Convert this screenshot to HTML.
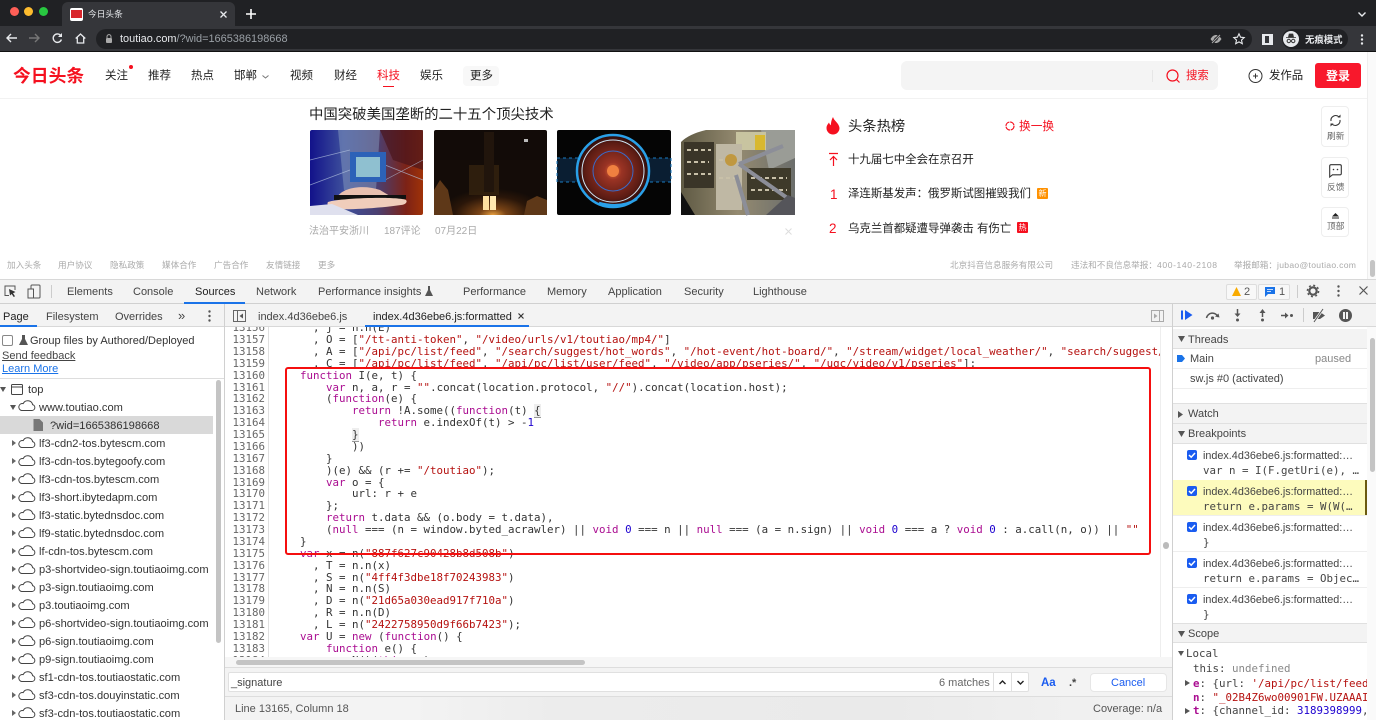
<!DOCTYPE html>
<html lang="zh"><head><meta charset="utf-8"><title>今日头条</title>
<style>
html,body{margin:0;padding:0;width:1376px;height:720px;overflow:hidden;background:#fff}
body{font-family:"Liberation Sans","Noto Sans CJK SC",sans-serif;position:relative}
.a{position:absolute}
.t{position:absolute;white-space:nowrap;height:16px;line-height:16px}
.n{font-size:11.5px;color:#222;top:68px}
.f{font-size:8.6px;color:#aaa;top:257px}
.dt{font-size:11px;color:#444;top:284px}
.st{font-size:11px;color:#444;top:309px}
.tr{font-size:11.1px;color:#333}
.mono{font-family:"DejaVu Sans Mono","Liberation Mono",monospace;font-size:10.8px!important}
#gut,#code{position:absolute;font-family:"DejaVu Sans Mono","Liberation Mono",monospace;font-size:10.8px;line-height:11.87px;white-space:pre;margin:0}
#gut{left:225px;width:40px;text-align:right;color:#666}
#code{left:274px;color:#333}
.k{color:#aa0d91}.s{color:#b5110f}.d{color:#1c00cf}
.h{font-size:11px;color:#444}
.bp{font-size:10.8px;color:#444;left:1203px}
.cb{position:absolute;left:1187px;width:10px;height:10px;border-radius:2px;background:#1a5cf0}
.cb svg{position:absolute;left:0;top:0}
svg{position:absolute;overflow:visible}
</style></head><body>

<!-- browser chrome -->
<div class="a" style="left:0;top:0;width:1376px;height:26px;background:#202124"></div>
<div class="a" style="left:10px;top:7px;width:9px;height:9px;border-radius:50%;background:#ff5f57"></div>
<div class="a" style="left:24px;top:7px;width:9px;height:9px;border-radius:50%;background:#febc2e"></div>
<div class="a" style="left:39px;top:7px;width:9px;height:9px;border-radius:50%;background:#28c840"></div>
<div class="a" style="left:62px;top:2px;width:173px;height:24px;background:#35363a;border-radius:6px 6px 0 0"></div>
<div class="a" style="left:70px;top:8px;width:13px;height:13px;background:#fff;border-radius:2px"></div>
<div class="a" style="left:71px;top:10px;width:11px;height:8px;background:#d8262c"></div>
<div class="t" style="left:88px;top:6px;font-size:8.7px;color:#e8eaed">今日头条</div>
<svg style="left:220px;top:11px" width="7" height="7"><path d="M.5.5l6 6M6.5.5l-6 6" stroke="#e8eaed" stroke-width="1.3"/></svg>
<svg style="left:246px;top:9px" width="10" height="10"><path d="M5 0v10M0 5h10" stroke="#fff" stroke-width="1.6"/></svg>
<svg style="left:1358px;top:12px" width="8" height="5"><path d="M.5.5L4 4 7.5.5" stroke="#e8eaed" stroke-width="1.4" fill="none"/></svg>

<div class="a" style="left:0;top:26px;width:1376px;height:25px;background:#35363a"></div>
<div class="a" style="left:0;top:51px;width:1376px;height:1px;background:#111"></div>
<svg style="left:6px;top:33px" width="11" height="10"><path d="M11 5H1M5 1L1 5l4 4" stroke="#e8eaed" stroke-width="1.4" fill="none"/></svg>
<svg style="left:29px;top:33px" width="11" height="10"><path d="M0 5h10M6 1l4 4-4 4" stroke="#777" stroke-width="1.4" fill="none"/></svg>
<svg style="left:52px;top:33px" width="11" height="11"><path d="M9.4 6.5A4.2 4.2 0 1 1 8.5 2.3" stroke="#e8eaed" stroke-width="1.4" fill="none"/><path d="M10 0v4H6z" fill="#e8eaed"/></svg>
<svg style="left:75px;top:33px" width="11" height="11"><path d="M.7 5.5L5.5 1l4.8 4.5M2.3 4.5v5.5h6.4V4.5" stroke="#e8eaed" stroke-width="1.3" fill="none"/></svg>
<div class="a" style="left:96px;top:29px;width:1156px;height:20px;border-radius:10px;background:#202124"></div>
<svg style="left:105px;top:34px" width="8" height="10"><path d="M2 4V2.6a2 2 0 0 1 4 0V4" stroke="#aaa" fill="none"/><rect x="1" y="4" width="6" height="5" rx="1" fill="#aaa"/></svg>
<div class="t" style="left:120px;top:31px;font-size:10.95px;color:#e8eaed;font-weight:400">toutiao.com<span style="color:#9aa0a6">/?wid=1665386198668</span></div>
<svg style="left:1210px;top:34px" width="12" height="10"><path d="M.5 5C2.5 2 4 1 6 1s3.500 1 5.500 4C9.500 8 8 9 6 9S2.500 8 .5 5z" fill="#aaa"/><circle cx="6" cy="5" r="1.800" fill="#35363a"/><path d="M2 9.500L10 .5" stroke="#202124" stroke-width="2.500"/><path d="M2 9L10 1" stroke="#aaa" stroke-width="1"/></svg>
<svg style="left:1233px;top:33px" width="12" height="11"><path d="M6 .8l1.600 3.400 3.600.4-2.700 2.500.8 3.600L6 8.900l-3.300 1.800.8-3.600L.8 4.600l3.600-.4z" stroke="#e8eaed" fill="none" stroke-width="1.100"/></svg>
<div class="a" style="left:1262px;top:34px;width:11px;height:11px;background:#e8eaed"></div>
<div class="a" style="left:1265px;top:36px;width:4px;height:7px;background:#35363a"></div>
<div class="a" style="left:1282px;top:29px;width:66px;height:20px;border-radius:10px;background:#202124"></div>
<div class="a" style="left:1283px;top:31px;width:16px;height:16px;border-radius:50%;background:#e8eaed"></div>
<svg style="left:1286px;top:34px" width="10" height="10"><path d="M2.500 3l.7-3h3.600l.7 3zM0 3.500h10" stroke="#333" fill="#333" stroke-width=".8"/><circle cx="2.800" cy="7" r="1.700" fill="none" stroke="#333"/><circle cx="7.200" cy="7" r="1.700" fill="none" stroke="#333"/></svg>
<div class="t" style="left:1305px;top:32px;font-size:9.400px;color:#e8eaed;font-weight:700">无痕模式</div>
<svg style="left:1360px;top:34px" width="4" height="11"><circle cx="2" cy="1.500" r="1.200" fill="#e8eaed"/><circle cx="2" cy="5.500" r="1.200" fill="#e8eaed"/><circle cx="2" cy="9.500" r="1.200" fill="#e8eaed"/></svg>

<!-- page header -->
<div class="a" style="left:0;top:98px;width:1367px;height:1px;background:#f2f2f2"></div>
<div class="a" style="left:1367px;top:52px;width:9px;height:228px;background:#fafafa;border-left:1px solid #eee;box-sizing:border-box"></div>
<div class="a" style="left:1370px;top:260px;width:5px;height:17px;background:#c4c4c4;border-radius:3px"></div>
<div class="t" style="left:13px;top:67px;height:18px;line-height:18px;font-size:17.800px;font-weight:700;color:#f5101f">今日头条</div>
<div class="t n" style="left:105px">关注</div><div class="a" style="left:129px;top:65px;width:4px;height:4px;border-radius:50%;background:#f5101f"></div>
<div class="t n" style="left:148px">推荐</div>
<div class="t n" style="left:191px">热点</div>
<div class="t n" style="left:234px">邯郸</div>
<svg style="left:262px;top:75px" width="7" height="4"><path d="M.5.5L3.500 3 6.500.5" stroke="#777" fill="none"/></svg>
<div class="t n" style="left:290px">视频</div>
<div class="t n" style="left:334px">财经</div>
<div class="t n" style="left:377px;color:#f5101f">科技</div><div class="a" style="left:383px;top:86px;width:11px;height:1px;background:#f5101f"></div>
<div class="t n" style="left:420px">娱乐</div>
<div class="a" style="left:463px;top:66px;width:36px;height:20px;background:#f8f8f8;border-radius:4px"></div>
<div class="t n" style="left:470px">更多</div>
<div class="a" style="left:901px;top:61px;width:317px;height:29px;background:#f4f4f4;border-radius:6px"></div>
<div class="a" style="left:1152px;top:70px;width:1px;height:12px;background:#e6e6e6"></div>
<svg style="left:1166px;top:69px" width="14" height="14"><circle cx="6.500" cy="6.500" r="5.500" fill="none" stroke="#f5101f" stroke-width="1.200"/><path d="M10.500 10.500l3 3" stroke="#f5101f" stroke-width="1.200"/></svg>
<div class="t" style="left:1186px;top:68px;font-size:11.400px;color:#f5101f">搜索</div>
<svg style="left:1248px;top:69px" width="15" height="15"><circle cx="7.500" cy="7" r="6.500" fill="none" stroke="#333" stroke-width="1"/><path d="M7.500 4.500v5M5 7h5" stroke="#333"/></svg>
<div class="t" style="left:1269px;top:68px;font-size:11.400px;color:#222">发作品</div>
<div class="a" style="left:1315px;top:63px;width:46px;height:25px;background:#f8182c;border-radius:3px"></div>
<div class="t" style="left:1326px;top:68px;font-size:12px;color:#fff;font-weight:700">登录</div>

<!-- article -->
<div class="t" style="left:309px;top:107px;font-size:14.400px;color:#222">中国突破美国垄断的二十五个顶尖技术</div>
<svg style="left:310px;top:130px" width="113" height="85" viewBox="0 0 113 85">
<defs><linearGradient id="g1" x1="0" x2="1" y1="0" y2="0"><stop offset="0" stop-color="#12128a"/><stop offset=".3" stop-color="#3d4f9c"/><stop offset=".6" stop-color="#4b3f70"/><stop offset=".85" stop-color="#7c2216"/><stop offset="1" stop-color="#a03208"/></linearGradient></defs>
<rect width="113" height="85" rx="2" fill="url(#g1)"/><path d="M70 0h43v40l-30-10z" fill="#4a151c" opacity=".7"/>
<path d="M28 0h42l-4 60H34z" fill="#8fa4c4" opacity=".45"/>
<path d="M0 30L40 20M0 55L40 40M75 35L113 50M75 50l38-20" stroke="#b4c4e0" stroke-width=".7" opacity=".7"/>
<rect x="40" y="22" width="36" height="30" fill="#2c62b8"/><rect x="46" y="27" width="24" height="20" fill="#8fc0d0"/>
<path d="M28 66c5-8 25-12 42-6l10 6-40 3z" fill="#e8c0b0"/><path d="M24 65h72v4l-72 1z" fill="#111"/>
<path d="M18 72c10-4 70-6 78-2 2 2-1 5-5 5-20 3-50 5-65 4-6-1-10-4-8-7z" fill="#f0cdbb"/><path d="M0 76l22-2 26 11H0z" fill="#dfe0ee"/></svg>
<svg style="left:434px;top:130px" width="113" height="85" viewBox="0 0 113 85">
<defs><radialGradient id="g2" cx=".52" cy="1" r=".48"><stop offset="0" stop-color="#e8a040"/><stop offset=".25" stop-color="#7a4416"/><stop offset=".7" stop-color="#2a1609"/><stop offset="1" stop-color="#140c08"/></radialGradient></defs>
<rect width="113" height="85" rx="2" fill="#120b08"/><rect y="30" width="113" height="55" fill="url(#g2)"/>
<rect x="35" y="35" width="30" height="30" fill="#35230f" opacity=".8"/><rect x="50" y="2" width="10" height="60" fill="#21150c"/>
<path d="M0 60l6-10 8 10 5 25H0z" fill="#5e3818"/><path d="M90 85l3-14 10-5 10 4v15z" fill="#5e3818"/>
<rect x="49" y="66" width="6" height="14" fill="#ffe0a0"/><rect x="56" y="66" width="6" height="14" fill="#ffe8b0"/><rect x="90" y="9" width="4" height="3" fill="#bbb"/></svg>
<svg style="left:557px;top:130px" width="114" height="85" viewBox="0 0 114 85">
<defs><radialGradient id="g3"><stop offset="0" stop-color="#e87038"/><stop offset=".25" stop-color="#9a3324"/><stop offset=".8" stop-color="#5c1c14"/><stop offset="1" stop-color="#2c0c0a"/></radialGradient></defs>
<rect width="114" height="85" rx="2" fill="#050505"/>
<path d="M0 28h114v24H0z" fill="#0a1e32" stroke="#1a7ac0" stroke-dasharray="3 3"/>
<circle cx="56" cy="41" r="35" fill="url(#g3)"/><circle cx="56" cy="41" r="36" fill="none" stroke="#2aa0e8" stroke-width="2.500"/><circle cx="56" cy="41" r="31" fill="none" stroke="#cfe8f8" stroke-width="1"/><circle cx="56" cy="41" r="20" fill="none" stroke="#3a6ac8" stroke-width="1"/><circle cx="56" cy="41" r="6" fill="#f08040"/>
<path d="M42 73q22 6 38-4" stroke="#2aa0e8" stroke-width="2.500" fill="none"/></svg>
<svg style="left:681px;top:130px" width="114" height="85" viewBox="0 0 114 85">
<defs><linearGradient id="g4" x1="0" x2="1"><stop offset="0" stop-color="#5f5a44"/><stop offset=".5" stop-color="#948a70"/><stop offset="1" stop-color="#6b6e6c"/></linearGradient></defs>
<rect width="114" height="85" rx="2" fill="url(#g4)"/><path d="M0 0h25Q8 4 0 12z" fill="#fff"/><path d="M80 0h34v28L88 40z" fill="#9a9c96"/>
<rect x="55" y="2" width="30" height="18" fill="#c8c4a0"/><rect x="74" y="5" width="10" height="15" fill="#d8b830"/>
<rect x="35" y="14" width="26" height="66" fill="#bfb8a4"/><rect x="3" y="12" width="30" height="46" fill="#3a3528"/><rect x="66" y="38" width="44" height="32" fill="#3e3a2a"/>
<path d="M6 20h24M6 32h22M6 44h24M70 48h36M70 60h36M38 30h20M38 48h20" stroke="#c8c0a8" stroke-width="2" stroke-dasharray="4 3"/>
<path d="M58 34l54 38M58 34l44-18M55 45l12 40" stroke="#8c8e98" stroke-width="4" fill="none"/><circle cx="50" cy="30" r="6" fill="#c09840"/><path d="M0 62l14 23H0z" fill="#111"/><path d="M85 85l22-20 7 3v17z" fill="#55555a"/></svg>
<div class="t" style="left:309px;top:224px;font-size:10px;color:#aaa">法治平安浙川</div>
<div class="t" style="left:384px;top:224px;font-size:10px;color:#aaa">187评论</div>
<div class="t" style="left:435px;top:224px;font-size:10px;color:#aaa">07月22日</div>
<svg style="left:785px;top:228px" width="7" height="7"><path d="M.5.5l6 6M6.500.5l-6 6" stroke="#ddd"/></svg>

<!-- hot list -->
<svg style="left:826px;top:117px" width="14" height="18"><path d="M7 0c1 4 6 6 6.500 11A6.500 6.500 0 0 1 .5 11C.5 8.500 2 7 3 5.500c.5 1.500 1 2.200 1.800 2.700C5 5.500 5.500 2.500 7 0z" fill="#f5101f"/></svg>
<div class="t" style="left:848px;top:119px;font-size:14.300px;color:#222">头条热榜</div>
<svg style="left:1005px;top:121px" width="10" height="10"><circle cx="5" cy="5" r="4" fill="none" stroke="#f5101f" stroke-width="1.200" stroke-dasharray="5.500 .8"/></svg>
<div class="t" style="left:1019px;top:119px;font-size:11.700px;color:#f5101f">换一换</div>
<svg style="left:829px;top:153px" width="9" height="13"><path d="M0 .5h9M4.500 13V3.500M1 7l3.500-3.500L8 7" stroke="#f5101f" stroke-width="1.200" fill="none"/></svg>
<div class="t" style="left:848px;top:152px;font-size:11.450px;color:#222">十九届七中全会在京召开</div>
<div class="t" style="left:830px;top:187px;font-size:13.500px;color:#f5101f">1</div>
<div class="t" style="left:848px;top:186px;font-size:11.450px;color:#222">泽连斯基发声：俄罗斯试图摧毁我们</div>
<div class="a" style="left:1037px;top:188px;width:11px;height:11px;background:#ff9100;border-radius:1px;color:#fff;font-size:8px;line-height:11px;text-align:center">新</div>
<div class="t" style="left:829px;top:221px;font-size:13.500px;color:#f5101f">2</div>
<div class="t" style="left:848px;top:221px;font-size:11.450px;color:#222">乌克兰首都疑遭导弹袭击 有伤亡</div>
<div class="a" style="left:1017px;top:222px;width:11px;height:11px;background:#f5101f;border-radius:1px;color:#fff;font-size:8px;line-height:11px;text-align:center">热</div>

<!-- side widgets -->
<div class="a" style="left:1321px;top:106px;width:28px;height:41px;border:1px solid #eee;border-radius:4px;box-sizing:border-box"></div>
<svg style="left:1329px;top:114px" width="13" height="13"><path d="M2 7A4.700 4.700 0 0 1 10 3M11 6a4.700 4.700 0 0 1-8 4" stroke="#333" stroke-width="1.100" fill="none"/><path d="M8.500 3.500l3 0 0-3zM4.500 9.500l-3 0 0 3z" fill="#333"/></svg>
<div class="t" style="left:1327px;top:128px;font-size:8.700px;color:#666">刷新</div>
<div class="a" style="left:1321px;top:157px;width:28px;height:41px;border:1px solid #eee;border-radius:4px;box-sizing:border-box"></div>
<svg style="left:1329px;top:164px" width="13" height="14"><path d="M.7 2C.7 1.200 1.200.7 2 .7h9c.8 0 1.300.5 1.300 1.300v7.500c0 .8-.5 1.300-1.300 1.300H3.500L.7 13z" fill="none" stroke="#333" stroke-width="1.100"/><circle cx="4.500" cy="5.500" r=".8" fill="#333"/><circle cx="8.500" cy="5.500" r=".8" fill="#333"/></svg>
<div class="t" style="left:1327px;top:179px;font-size:8.700px;color:#666">反馈</div>
<div class="a" style="left:1321px;top:207px;width:28px;height:30px;border:1px solid #eee;border-radius:4px;box-sizing:border-box"></div>
<svg style="left:1332px;top:213px" width="7" height="6"><path d="M3.500 0L7 3.500H0z" fill="#222"/><path d="M0 5h7" stroke="#222"/></svg>
<div class="t" style="left:1327px;top:218px;font-size:8.700px;color:#666">顶部</div>

<!-- footer -->
<div class="t f" style="left:7px">加入头条</div><div class="t f" style="left:58px">用户协议</div><div class="t f" style="left:110px">隐私政策</div><div class="t f" style="left:162px">媒体合作</div><div class="t f" style="left:214px">广告合作</div><div class="t f" style="left:266px">友情链接</div><div class="t f" style="left:318px">更多</div>
<div class="t f" style="left:950px">北京抖音信息服务有限公司</div><div class="t f" style="left:1071px">违法和不良信息举报：<span style="letter-spacing:.6px">400-140-2108</span></div><div class="t f" style="left:1234px">举报邮箱：<span style="letter-spacing:.3px">jubao@toutiao.com</span></div>

<!-- devtools -->
<div class="a" style="left:0;top:279px;width:1376px;height:441px;background:#fff;border-top:1px solid #d8d8d8;box-sizing:border-box"></div>
<div class="a" style="left:0;top:280px;width:1376px;height:24px;background:#f3f3f3;border-bottom:1px solid #d0d0d0;box-sizing:border-box"></div>
<svg style="left:4px;top:285px" width="12" height="13"><path d="M5 10.500H1V1h10v4" stroke="#555" fill="none"/><path d="M5 4l6.500 3-2.500 1.200 2 3-1.300.8-2-3L6 10.500z" fill="#333"/></svg>
<svg style="left:27px;top:284px" width="14" height="15"><rect x="4" y="1" width="9" height="13" rx="1" fill="none" stroke="#555"/><rect x="1" y="5" width="5.500" height="9" fill="#f3f3f3" stroke="#555"/></svg>
<div class="a" style="left:51px;top:285px;width:1px;height:13px;background:#ccc"></div>
<div class="t dt" style="left:67px">Elements</div><div class="t dt" style="left:133px">Console</div><div class="t dt" style="left:195px;color:#222">Sources</div><div class="t dt" style="left:256px">Network</div><div class="t dt" style="left:318px">Performance insights</div>
<svg style="left:425px;top:286px" width="8" height="10"><path d="M2.500 0h3M3 0v4L0 10h8L5 4V0z" fill="#555"/></svg>
<div class="t dt" style="left:463px">Performance</div><div class="t dt" style="left:547px">Memory</div><div class="t dt" style="left:608px">Application</div><div class="t dt" style="left:684px">Security</div><div class="t dt" style="left:753px">Lighthouse</div>
<div class="a" style="left:184px;top:302px;width:61px;height:2px;background:#1a73e8"></div>
<div class="a" style="left:1226px;top:284px;width:31px;height:16px;border:1px solid #ddd;border-radius:2px;box-sizing:border-box;background:#f8f8f8"></div>
<svg style="left:1232px;top:287px" width="9" height="9"><path d="M4.500 0L9 9H0z" fill="#f9ab00"/></svg>
<div class="t" style="left:1244px;top:284px;font-size:11px;color:#555">2</div>
<div class="a" style="left:1258px;top:284px;width:32px;height:16px;border:1px solid #ddd;border-radius:2px;box-sizing:border-box;background:#f8f8f8"></div>
<svg style="left:1265px;top:287px" width="10" height="10"><path d="M0 0h10v7H3l-3 3z" fill="#1a73e8"/><path d="M2 2.500h6M2 4.500h4" stroke="#fff" stroke-width=".8"/></svg>
<div class="t" style="left:1279px;top:284px;font-size:11px;color:#555">1</div>
<div class="a" style="left:1297px;top:285px;width:1px;height:13px;background:#ccc"></div>
<svg style="left:1307px;top:285px" width="12" height="12"><circle cx="6" cy="6" r="3.700" fill="none" stroke="#555" stroke-width="2.200"/><circle cx="6" cy="6" r="5.600" fill="none" stroke="#555" stroke-width="1.500" stroke-dasharray="2 2.400"/></svg>
<svg style="left:1337px;top:285px" width="3" height="12"><circle cx="1.500" cy="1.500" r="1.200" fill="#555"/><circle cx="1.500" cy="6" r="1.200" fill="#555"/><circle cx="1.500" cy="10.500" r="1.200" fill="#555"/></svg>
<svg style="left:1359px;top:286px" width="9" height="9"><path d="M.5.500l8 8M8.500.500l-8 8" stroke="#555" stroke-width="1.200"/></svg>

<!-- left panel -->
<div class="a" style="left:224px;top:304px;width:1px;height:416px;background:#d0d0d0"></div>
<div class="a" style="left:0;top:304px;width:224px;height:23px;background:#f3f3f3;border-bottom:1px solid #d8d8d8;box-sizing:border-box"></div>
<div class="a" style="left:0;top:325px;width:37px;height:2px;background:#1a73e8"></div>
<div class="t st" style="left:3px;color:#222">Page</div><div class="t st" style="left:46px">Filesystem</div><div class="t st" style="left:115px">Overrides</div>
<div class="t st" style="left:178px;font-size:13px;top:308px">»</div>
<svg style="left:208px;top:310px" width="3" height="12"><circle cx="1.500" cy="1.500" r="1.200" fill="#555"/><circle cx="1.500" cy="6" r="1.200" fill="#555"/><circle cx="1.500" cy="10.500" r="1.200" fill="#555"/></svg>
<div class="a" style="left:2px;top:335px;width:11px;height:11px;border:1px solid #888;border-radius:2px;background:#fff;box-sizing:border-box"></div>
<svg style="left:19px;top:335px" width="9" height="10"><path d="M3 0h3v4l3 6H0l3-6z" fill="#555"/></svg>
<div class="t" style="left:30px;top:333px;font-size:11px;color:#333">Group files by Authored/Deployed</div>
<div class="t" style="left:2px;top:348px;font-size:11px;color:#444;text-decoration:underline">Send feedback</div>
<div class="t" style="left:2px;top:361px;font-size:11px;color:#1a73e8;text-decoration:underline">Learn More</div>
<div class="a" style="left:0;top:378px;width:224px;height:1px;background:#ddd"></div>
<div class="a" style="left:216px;top:380px;width:5px;height:263px;background:#c4c4c4;border-radius:3px"></div>
<div class="a" style="left:0;top:416px;width:213px;height:18px;background:#d9d9d9"></div>
<svg style="left:0;top:0" width="224" height="720">
<defs><path id="c" transform="translate(0,-1.500)" d="M2.500 12h10.500a3 3 0 0 0 .6-5.900 5 5 0 0 0-9.400-1A3.500 3.500 0 0 0 2.500 12z" fill="none" stroke="#444" stroke-width="1"/><path id="r" d="M0 0l4 3-4 3z" fill="#666"/></defs>
<path d="M0 387l6 0-3 5z" fill="#555"/><rect x="11.500" y="384.500" width="11" height="10" rx="1" fill="none" stroke="#444"/><path d="M11.500 387h11" stroke="#444"/>
<path d="M10 405l6 0-3 5z" fill="#555"/><use href="#c" x="19" y="400"/>
<path d="M33.500 419h6l3.500 3.500V431h-9.500z" fill="#777"/>
<use href="#r" x="12" y="440"/><use href="#c" x="19" y="437"/>
<use href="#r" x="12" y="458"/><use href="#c" x="19" y="455"/>
<use href="#r" x="12" y="476"/><use href="#c" x="19" y="473"/>
<use href="#r" x="12" y="494"/><use href="#c" x="19" y="491"/>
<use href="#r" x="12" y="512"/><use href="#c" x="19" y="509"/>
<use href="#r" x="12" y="530"/><use href="#c" x="19" y="527"/>
<use href="#r" x="12" y="548"/><use href="#c" x="19" y="545"/>
<use href="#r" x="12" y="566"/><use href="#c" x="19" y="563"/>
<use href="#r" x="12" y="584"/><use href="#c" x="19" y="581"/>
<use href="#r" x="12" y="602"/><use href="#c" x="19" y="599"/>
<use href="#r" x="12" y="620"/><use href="#c" x="19" y="617"/>
<use href="#r" x="12" y="638"/><use href="#c" x="19" y="635"/>
<use href="#r" x="12" y="656"/><use href="#c" x="19" y="653"/>
<use href="#r" x="12" y="674"/><use href="#c" x="19" y="671"/>
<use href="#r" x="12" y="692"/><use href="#c" x="19" y="689"/>
<use href="#r" x="12" y="710"/><use href="#c" x="19" y="707"/>
</svg>
<div class="t tr" style="left:28px;top:382px">top</div>
<div class="t tr" style="left:39px;top:400px">www.toutiao.com</div>
<div class="t tr" style="left:50px;top:418px">?wid=1665386198668</div>
<div class="t tr" style="left:39px;top:436px">lf3-cdn2-tos.bytescm.com</div>
<div class="t tr" style="left:39px;top:454px">lf3-cdn-tos.bytegoofy.com</div>
<div class="t tr" style="left:39px;top:472px">lf3-cdn-tos.bytescm.com</div>
<div class="t tr" style="left:39px;top:490px">lf3-short.ibytedapm.com</div>
<div class="t tr" style="left:39px;top:508px">lf3-static.bytednsdoc.com</div>
<div class="t tr" style="left:39px;top:526px">lf9-static.bytednsdoc.com</div>
<div class="t tr" style="left:39px;top:544px">lf-cdn-tos.bytescm.com</div>
<div class="t tr" style="left:39px;top:562px">p3-shortvideo-sign.toutiaoimg.com</div>
<div class="t tr" style="left:39px;top:580px">p3-sign.toutiaoimg.com</div>
<div class="t tr" style="left:39px;top:598px">p3.toutiaoimg.com</div>
<div class="t tr" style="left:39px;top:616px">p6-shortvideo-sign.toutiaoimg.com</div>
<div class="t tr" style="left:39px;top:634px">p6-sign.toutiaoimg.com</div>
<div class="t tr" style="left:39px;top:652px">p9-sign.toutiaoimg.com</div>
<div class="t tr" style="left:39px;top:670px">sf1-cdn-tos.toutiaostatic.com</div>
<div class="t tr" style="left:39px;top:688px">sf3-cdn-tos.douyinstatic.com</div>
<div class="t tr" style="left:39px;top:706px">sf3-cdn-tos.toutiaostatic.com</div>

<!-- code -->
<div class="a" style="left:225px;top:327px;width:935px;height:330px;overflow:hidden">
<div class="a" style="left:43px;top:0;width:1px;height:330px;background:#e0e0e0"></div>
<pre id="gut" style="left:0;top:-4.800px">13156
13157
13158
13159
13160
13161
13162
13163
13164
13165
13166
13167
13168
13169
13170
13171
13172
13173
13174
13175
13176
13177
13178
13179
13180
13181
13182
13183
13184</pre>
<pre id="code" style="left:49px;top:-4.800px">      , j = n.n(E)
      , O = [<span class="s">"/tt-anti-token"</span>, <span class="s">"/video/urls/v1/toutiao/mp4/"</span>]
      , A = [<span class="s">"/api/pc/list/feed"</span>, <span class="s">"/search/suggest/hot_words"</span>, <span class="s">"/hot-event/hot-board/"</span>, <span class="s">"/stream/widget/local_weather/"</span>, <span class="s">"search/suggest/</span>
      , C = [<span class="s">"/api/pc/list/feed"</span>, <span class="s">"/api/pc/list/user/feed"</span>, <span class="s">"/video/app/pseries/"</span>, <span class="s">"/ugc/video/v1/pseries"</span>];
    <span class="k">function</span> I(e, t) {
        <span class="k">var</span> n, a, r = <span class="s">""</span>.concat(location.protocol, <span class="s">"//"</span>).concat(location.host);
        (<span class="k">function</span>(e) {
            <span class="k">return</span> !A.some((<span class="k">function</span>(t) <span style="border-bottom:1px solid #999;background:#eee">{</span>
                <span class="k">return</span> e.indexOf(t) &gt; -<span class="d">1</span>
            <span style="border-bottom:1px solid #999;background:#eee">}</span>
            ))
        }
        )(e) &amp;&amp; (r += <span class="s">"/toutiao"</span>);
        <span class="k">var</span> o = {
            url: r + e
        };
        <span class="k">return</span> t.data &amp;&amp; (o.body = t.data),
        (<span class="k">null</span> === (n = window.byted_acrawler) || <span class="k">void</span> <span class="d">0</span> === n || <span class="k">null</span> === (a = n.sign) || <span class="k">void</span> <span class="d">0</span> === a ? <span class="k">void</span> <span class="d">0</span> : a.call(n, o)) || <span class="s">""</span>
    }
    <span class="k">var</span> x = n(<span class="s">"887f627c90428b8d508b"</span>)
      , T = n.n(x)
      , S = n(<span class="s">"4ff4f3dbe18f70243983"</span>)
      , N = n.n(S)
      , D = n(<span class="s">"21d65a030ead917f710a"</span>)
      , R = n.n(D)
      , L = n(<span class="s">"2422758950d9f66b7423"</span>);
    <span class="k">var</span> U = <span class="k">new</span> (<span class="k">function</span>() {
        <span class="k">function</span> e() {
            N()(<span class="k">this</span>, e)</pre>
</div>
<!-- source tabs -->
<div class="a" style="left:225px;top:304px;width:947px;height:23px;background:#f3f3f3;border-bottom:1px solid #d8d8d8;box-sizing:border-box"></div>
<svg style="left:233px;top:310px" width="13" height="12"><rect x=".5" y=".5" width="12" height="11" fill="none" stroke="#666"/><path d="M4.500 .5v11" stroke="#666"/><path d="M10 3.500v5L6.500 6z" fill="#555"/></svg>
<div class="t st" style="left:258px">index.4d36ebe6.js</div>
<div class="t st" style="left:373px;color:#222">index.4d36ebe6.js:formatted</div>
<svg style="left:518px;top:313px" width="6" height="6"><path d="M.5.500l5 5M5.500.500l-5 5" stroke="#333" stroke-width="1.200"/></svg>
<div class="a" style="left:365px;top:325px;width:164px;height:2px;background:#1a73e8"></div>
<svg style="left:1151px;top:310px" width="13" height="12"><rect x=".5" y=".5" width="12" height="11" fill="none" stroke="#aaa"/><path d="M8.500 .5v11" stroke="#aaa"/><path d="M3 3.500v5L6.500 6z" fill="#aaa"/></svg>
<!-- red box -->
<div class="a" style="left:285px;top:367px;width:866px;height:188px;border:2px solid #f50f0f;border-radius:3px;box-sizing:border-box"></div>
<!-- scrollbars -->
<div class="a" style="left:1160px;top:327px;width:12px;height:330px;background:#fff;border-left:1px solid #eee;box-sizing:border-box"></div>
<div class="a" style="left:1163px;top:542px;width:6px;height:7px;border-radius:3px;background:#bbb"></div>
<div class="a" style="left:225px;top:657px;width:947px;height:10px;background:#f6f6f6"></div>
<div class="a" style="left:236px;top:660px;width:349px;height:5px;border-radius:3px;background:#c4c4c4"></div>
<!-- search -->
<div class="a" style="left:225px;top:667px;width:947px;height:30px;background:#f3f3f3;border-top:1px solid #ddd;border-bottom:1px solid #ddd;box-sizing:border-box"></div>
<div class="a" style="left:228px;top:672px;width:801px;height:20px;background:#fff;border:1px solid #e0e0e0;border-radius:2px;box-sizing:border-box"></div>
<div class="t" style="left:231px;top:675px;font-size:11px;color:#444">_signature</div>
<div class="t" style="left:939px;top:675px;font-size:11px;color:#666">6 matches</div>
<div class="a" style="left:993px;top:672px;width:1px;height:20px;background:#e0e0e0"></div><div class="a" style="left:1011px;top:672px;width:1px;height:20px;background:#e0e0e0"></div>
<svg style="left:999px;top:680px" width="7" height="5"><path d="M.5 4L3.500 1l3 3" stroke="#222" stroke-width="1.400" fill="none"/></svg>
<svg style="left:1017px;top:680px" width="7" height="5"><path d="M.5 1l3 3 3-3" stroke="#222" stroke-width="1.400" fill="none"/></svg>
<div class="t" style="left:1041px;top:675px;font-size:11.500px;font-weight:700;color:#1a5cf0">Aa</div>
<div class="t" style="left:1069px;top:675px;font-size:11px;font-weight:700;color:#444">.*</div>
<div class="a" style="left:1090px;top:673px;width:77px;height:19px;background:#fff;border:1px solid #e6e6e6;border-radius:4px;box-sizing:border-box"></div>
<div class="t" style="left:1111px;top:675px;font-size:11px;color:#1a5cf0">Cancel</div>
<!-- status -->
<div class="a" style="left:225px;top:697px;width:947px;height:23px;background:linear-gradient(90deg,#f3f3f3 0,#f3f3f3 20%,#ececec 35%,#eaeaea 70%,#f3f3f3 100%)"></div>
<div class="t" style="left:235px;top:701px;font-size:11px;color:#555">Line 13165, Column 18</div>
<div class="t" style="left:1093px;top:701px;font-size:11px;color:#555">Coverage: n/a</div>

<!-- right panel -->
<div class="a" style="left:1172px;top:304px;width:204px;height:416px;background:#fff;border-left:1px solid #d0d0d0;box-sizing:border-box"></div>
<div class="a" style="left:1173px;top:304px;width:203px;height:23px;background:#f3f3f3;border-bottom:1px solid #d8d8d8;box-sizing:border-box"></div>
<svg style="left:1181px;top:310px" width="12" height="12"><path d="M1 .5v9" stroke="#1a5cf0" stroke-width="2"/><path d="M4 0l7.500 5L4 10z" fill="#1a5cf0"/></svg>
<svg style="left:1205px;top:311px" width="15" height="9"><path d="M1.500 7A6 6 0 0 1 13 6" stroke="#555" stroke-width="1.500" fill="none"/><path d="M10 5.500l4.500 1-1 -4z" fill="#555"/><circle cx="7.500" cy="7" r="1.600" fill="#555"/></svg>
<svg style="left:1234px;top:309px" width="7" height="13"><path d="M3.500 0v6" stroke="#555" stroke-width="1.500"/><path d="M.5 4.500h6L3.500 8z" fill="#555"/><circle cx="3.500" cy="11" r="1.500" fill="#555"/></svg>
<svg style="left:1259px;top:309px" width="7" height="13"><path d="M3.500 8V3" stroke="#555" stroke-width="1.500"/><path d="M.5 4h6L3.500 0z" fill="#555"/><circle cx="3.500" cy="11" r="1.500" fill="#555"/></svg>
<svg style="left:1281px;top:312px" width="13" height="7"><path d="M0 3.500h5" stroke="#555" stroke-width="1.500"/><path d="M4 .5v6l3.500-3z" fill="#555"/><circle cx="10.500" cy="3.500" r="1.500" fill="#555"/></svg>
<div class="a" style="left:1303px;top:308px;width:1px;height:14px;background:#ccc"></div>
<svg style="left:1312px;top:309px" width="15" height="13"><path d="M1 3h7l5 3.500-5 3.500H1z" fill="#555"/><path d="M2 13L11 0" stroke="#f3f3f3" stroke-width="2.500"/><path d="M2 13L11 0" stroke="#555" stroke-width="1"/></svg>
<div class="a" style="left:1339px;top:309px;width:13px;height:13px;border-radius:50%;background:#555"></div>
<div class="a" style="left:1343px;top:312px;width:2px;height:7px;background:#f3f3f3"></div><div class="a" style="left:1346px;top:312px;width:2px;height:7px;background:#f3f3f3"></div>

<div class="a" style="left:1173px;top:329px;width:194px;height:20px;background:#f3f3f3;border-bottom:1px solid #e0e0e0;box-sizing:border-box"></div>
<svg style="left:1178px;top:336px" width="7" height="6"><path d="M0 0h7L3.500 6z" fill="#555"/></svg>
<div class="t h" style="left:1188px;top:332px">Threads</div>
<svg style="left:1177px;top:354px" width="8" height="9"><path d="M0 1h5l3 3.500L5 8H0z" fill="#1a73e8"/></svg>
<div class="t h" style="left:1190px;top:351px">Main</div>
<div class="t h" style="left:1315px;top:351px;color:#888">paused</div>
<div class="a" style="left:1173px;top:368px;width:194px;height:1px;background:#eee"></div>
<div class="t h" style="left:1190px;top:371px">sw.js #0 (activated)</div>
<div class="a" style="left:1173px;top:388px;width:194px;height:1px;background:#eee"></div>
<div class="a" style="left:1173px;top:403px;width:194px;height:21px;background:#f3f3f3;border-top:1px solid #e0e0e0;border-bottom:1px solid #e0e0e0;box-sizing:border-box"></div>
<svg style="left:1178px;top:411px" width="5" height="7"><path d="M0 0l5 3.500L0 7z" fill="#555"/></svg>
<div class="t h" style="left:1188px;top:406px">Watch</div>
<div class="a" style="left:1173px;top:424px;width:194px;height:20px;background:#f3f3f3;border-bottom:1px solid #e0e0e0;box-sizing:border-box"></div>
<svg style="left:1178px;top:431px" width="7" height="6"><path d="M0 0h7L3.500 6z" fill="#555"/></svg>
<div class="t h" style="left:1188px;top:426px">Breakpoints</div>

<div class="a" style="left:1173px;top:480px;width:194px;height:35px;background:#fdfbbd;border-right:2px solid #6b5a10;box-sizing:border-box"></div>
<div class="a" style="left:1173px;top:515px;width:194px;height:1px;background:#eee"></div>
<div class="a" style="left:1173px;top:551px;width:194px;height:1px;background:#eee"></div>
<div class="a" style="left:1173px;top:587px;width:194px;height:1px;background:#eee"></div>

<div class="cb" style="top:450px"><svg width="10" height="10"><path d="M2 5l2.200 2.200L8 3" stroke="#fff" stroke-width="1.500" fill="none"/></svg></div>
<div class="t bp" style="top:448px">index.4d36ebe6.js:formatted:…</div>
<div class="t mono" style="left:1203px;top:463px;color:#444">var n = I(F.getUri(e), …</div>
<div class="cb" style="top:486px"><svg width="10" height="10"><path d="M2 5l2.200 2.200L8 3" stroke="#fff" stroke-width="1.500" fill="none"/></svg></div>
<div class="t bp" style="top:484px">index.4d36ebe6.js:formatted:…</div>
<div class="t mono" style="left:1203px;top:499px;color:#444">return e.params = W(W(…</div>
<div class="cb" style="top:522px"><svg width="10" height="10"><path d="M2 5l2.200 2.200L8 3" stroke="#fff" stroke-width="1.500" fill="none"/></svg></div>
<div class="t bp" style="top:520px">index.4d36ebe6.js:formatted:…</div>
<div class="t mono" style="left:1203px;top:535px;color:#444">}</div>
<div class="cb" style="top:558px"><svg width="10" height="10"><path d="M2 5l2.200 2.200L8 3" stroke="#fff" stroke-width="1.500" fill="none"/></svg></div>
<div class="t bp" style="top:556px">index.4d36ebe6.js:formatted:…</div>
<div class="t mono" style="left:1203px;top:571px;color:#444">return e.params = Objec…</div>
<div class="cb" style="top:594px"><svg width="10" height="10"><path d="M2 5l2.200 2.200L8 3" stroke="#fff" stroke-width="1.500" fill="none"/></svg></div>
<div class="t bp" style="top:592px">index.4d36ebe6.js:formatted:…</div>
<div class="t mono" style="left:1203px;top:607px;color:#444">}</div>

<div class="a" style="left:1173px;top:623px;width:194px;height:20px;background:#f3f3f3;border-top:1px solid #e0e0e0;border-bottom:1px solid #e0e0e0;box-sizing:border-box"></div>
<svg style="left:1178px;top:631px" width="7" height="6"><path d="M0 0h7L3.500 6z" fill="#555"/></svg>
<div class="t h" style="left:1188px;top:626px">Scope</div>
<div class="a" style="left:1173px;top:643px;width:194px;height:77px;overflow:hidden">
<svg style="left:5px;top:8px" width="6" height="5"><path d="M0 0h6L3 5z" fill="#555"/></svg>
<div class="t mono" style="left:13px;top:3px;color:#444">Local</div>
<div class="t mono" style="left:20px;top:18px;color:#444">this: <span style="color:#888">undefined</span></div>
<svg style="left:12px;top:37px" width="5" height="6"><path d="M0 0l5 3-5 3z" fill="#555"/></svg>
<div class="t mono" style="left:20px;top:33px;color:#444"><span class="k" style="font-weight:700">e</span>: {url: <span class="s">'/api/pc/list/feed</span></div>
<div class="t mono" style="left:20px;top:47px;color:#444"><span class="k" style="font-weight:700">n</span>: <span class="s">"_02B4Z6wo00901FW.UZAAAI</span></div>
<svg style="left:12px;top:65px" width="5" height="6"><path d="M0 0l5 3-5 3z" fill="#555"/></svg>
<div class="t mono" style="left:20px;top:60px;color:#444"><span class="k" style="font-weight:700">t</span>: {channel_id: <span class="d">3189398999</span>,</div>
</div>
<div class="a" style="left:1367px;top:327px;width:9px;height:393px;background:#fafafa"></div>
<div class="a" style="left:1370px;top:338px;width:5px;height:134px;background:#c4c4c4;border-radius:3px"></div>
</body></html>
